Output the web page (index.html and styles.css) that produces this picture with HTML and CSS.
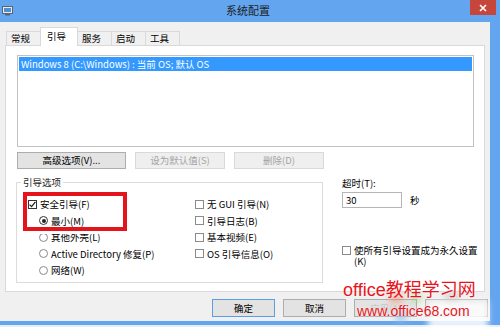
FILE: index.html
```html
<!DOCTYPE html>
<html lang="zh-CN">
<head>
    <meta charset="UTF-8">
    <title>系统配置</title>
    <link rel="stylesheet" href="styles.css">
</head>
<body>
    <div class="window">
        <div class="titlebar">
            <svg class="app-icon" width="11" height="10" viewBox="0 0 11 10">
                <rect x="0.5" y="0.5" width="10" height="7" fill="#e4ecf5" stroke="#5b6470"/>
                <rect x="2" y="2" width="7" height="4" fill="#4f8fd6"/>
                <rect x="3" y="8" width="5" height="1.5" fill="#5b6470"/>
            </svg>
            <span class="title">系统配置</span>
            <div class="close">
                <svg width="8" height="8" viewBox="0 0 8 8"><path d="M1 1 L7 7 M7 1 L1 7" stroke="#fff" stroke-width="1.6"/></svg>
            </div>
        </div>

        <div class="client">
            <div class="tabs">
                <div class="tab">常规</div>
                <div class="tab active">引导</div>
                <div class="tab">服务</div>
                <div class="tab">启动</div>
                <div class="tab">工具</div>
            </div>

            <div class="panel">
                <div class="listbox">
                    <div class="list-row selected">Windows 8 (C:\Windows) : 当前 OS; 默认 OS</div>
                </div>

                <div class="actions">
                    <button class="btn btn-wide">高级选项(V)...</button>
                    <button class="btn btn-mid" disabled>设为默认值(S)</button>
                    <button class="btn btn-mid" disabled>删除(D)</button>
                </div>

                <div class="options">
                    <fieldset class="group">
                        <legend>引导选项</legend>
                        <div class="group-body">
                            <div class="col">
                                <div class="opt"><span class="check on"><svg width="9" height="9" viewBox="0 0 9 9"><path d="M1.6 4.6 L3.6 6.6 L7.4 1.8" fill="none" stroke="#222" stroke-width="1.3"/></svg></span>安全引导(F)</div>
                                <div class="opt sub"><span class="radio on"></span>最小(M)</div>
                                <div class="opt sub"><span class="radio"></span>其他外壳(L)</div>
                                <div class="opt sub"><span class="radio"></span>Active Directory 修复(P)</div>
                                <div class="opt sub"><span class="radio"></span>网络(W)</div>
                            </div>
                            <div class="col">
                                <div class="opt"><span class="check"></span>无 GUI 引导(N)</div>
                                <div class="opt"><span class="check"></span>引导日志(B)</div>
                                <div class="opt"><span class="check"></span>基本视频(E)</div>
                                <div class="opt"><span class="check"></span>OS 引导信息(O)</div>
                            </div>
                        </div>
                    </fieldset>

                    <div class="side">
                        <div class="side-label">超时(T):</div>
                        <div class="timeout">
                            <div class="input">30</div>
                            <span>秒</span>
                        </div>
                        <div class="permanent"><span class="check"></span><span>使所有引导设置成为永久设置(K)</span></div>
                    </div>
                </div>
            </div>

            <div class="footer">
                <button class="btn btn-foot default">确定</button>
                <button class="btn btn-foot">取消</button>
                <button class="btn btn-foot faded">应用(A)</button>
                <button class="btn btn-foot faded">帮助</button>
            </div>
        </div>

        <!-- red mark drawn over the screenshot -->
        <div class="highlight"></div>

        <div class="watermark">
            <div class="wm-logo">
                <span class="blob b1"></span>
                <span class="blob b2"></span>
                <span class="blob b3"></span>
                <span class="blob b4"></span>
                <span class="blob b5"></span>
            </div>
            <div class="wm-title">office教程学习网</div>
            <div class="wm-url">www.office68.com</div>
        </div>
    </div>
</body>
</html>
```

FILE: styles.css
```css
* {
    box-sizing: border-box;
}
body {
    margin: 0;
    font-family: "Noto Sans CJK SC", sans-serif;
    font-size: 9.5px;
    color: #000;
}
.window {
    position: relative;
    width: 500px;
    height: 327px;
    background: #64a5ef;
    display: flex;
    flex-direction: column;
    overflow: hidden;
    box-shadow: inset 0 -2px 0 #e8eef6;
}
.titlebar {
    height: 22px;
    display: grid;
    grid-template-columns: 1fr auto 1fr;
    align-items: start;
    padding-right: 4px;
}
.app-icon {
    margin: 6px 0 0 2px;
}
.title {
    font-size: 11px;
    line-height: 14px;
    padding-top: 3px;
    color: #1e1e1e;
}
.close {
    justify-self: end;
    width: 26px;
    height: 15px;
    background: #c7463c;
    display: flex;
    align-items: center;
    justify-content: center;
}
.client {
    width: 490px;
    height: 299px;
    background: #f0f0f0;
    display: flex;
    flex-direction: column;
}
.tabs {
    height: 23px;
    display: flex;
    align-items: flex-end;
    padding-left: 6px;
    position: relative;
    z-index: 1;
}
.tab {
    width: 35px;
    height: 14px;
    padding-left: 4px;
    line-height: 13px;
    border: 1px solid #d9d9d9;
    border-bottom: none;
    background: #f0f0f0;
    margin-right: -1px;
}
.tab.active {
    width: 38px;
    height: 19px;
    padding-left: 6px;
    line-height: 17px;
    background: #fff;
    margin-bottom: -1px;
}
.panel {
    height: 247px;
    margin: 0 5px;
    background: #fff;
    border: 1px solid #d9d9d9;
    padding: 9px 10px 0 11px;
}
.listbox {
    height: 92px;
    border: 1px solid #c2c2c2;
    padding: 1px;
}
.list-row {
    height: 14px;
    line-height: 14px;
    padding-left: 2px;
}
.list-row.selected {
    background: #3399ff;
    color: #fff;
}
.actions {
    display: flex;
    gap: 9px;
    margin-top: 5px;
}
.btn {
    height: 17px;
    padding: 0;
    font: inherit;
    line-height: 15px;
    color: #000;
    background: #e3e3e3;
    border: 1px solid #adadad;
}
.btn:disabled {
    color: #a3a3a3;
    background: #efefef;
    border-color: #d9d9d9;
}
.btn-wide {
    width: 109px;
}
.btn-mid {
    width: 90px;
}
.options {
    display: flex;
    margin-top: 7px;
}
.group {
    flex: none;
    width: 307px;
    height: 107px;
    margin: 0 0 0 -1px;
    padding: 0 0 0 4px;
    border: 1px solid #dcdcdc;
    min-width: 0;
}
.group legend {
    padding: 0 2px;
    line-height: 12px;
    color: #1e1e1e;
}
.group-body {
    display: grid;
    grid-template-columns: 167px 1fr;
    padding: 8px 0 0 11px;
    margin-left: -4px;
}
.opt {
    height: 16.5px;
    display: flex;
    align-items: center;
    gap: 3px;
    white-space: nowrap;
}
.opt.sub {
    padding-left: 11px;
}
.check {
    flex: none;
    width: 9px;
    height: 9px;
    border: 1px solid #8a8a8a;
    background: #fff;
    display: flex;
}
.check.on {
    border-color: #333;
}
.check svg {
    margin: -1px;
}
.radio {
    flex: none;
    width: 9px;
    height: 9px;
    border: 1px solid #8a8a8a;
    border-radius: 50%;
    background: #fff;
    display: flex;
    align-items: center;
    justify-content: center;
}
.radio.on {
    border-color: #333;
}
.radio.on::after {
    content: "";
    width: 4px;
    height: 4px;
    border-radius: 50%;
    background: #222;
}
.side {
    flex: 1;
    margin: 0 -10px 0 19px;
    padding-top: 2px;
}
.side-label {
    line-height: 10px;
}
.timeout {
    display: flex;
    align-items: center;
    gap: 8px;
    margin-top: 4px;
}
.input {
    width: 60px;
    height: 16px;
    border: 1px solid #b5b5b5;
    line-height: 14px;
    padding-left: 3px;
}
.permanent {
    display: flex;
    align-items: flex-start;
    gap: 3px;
    margin-top: 37px;
    line-height: 11px;
}
.permanent .check {
    margin-top: 1px;
}
.footer {
    display: flex;
    justify-content: flex-end;
    gap: 8px;
    padding: 7px 2px 0 0;
}
.btn-foot {
    width: 63px;
    height: 18px;
    line-height: 16px;
}
.btn-foot.default {
    border-color: #5a9ee3;
}
.btn-foot.faded {
    color: #c8c8c8;
}
.highlight {
    position: absolute;
    left: 23px;
    top: 192px;
    width: 104px;
    height: 39px;
    border: 4px solid #e3141c;
    box-shadow: 0 3px 0 #fff;
}
.watermark {
    position: absolute;
    left: 343px;
    top: 281px;
    width: 150px;
    height: 46px;
}
.wm-logo {
    position: absolute;
    left: 40px;
    top: 6px;
    width: 110px;
    height: 40px;
}
.blob {
    position: absolute;
    filter: blur(3px);
    opacity: 0.55;
}
.b1 {
    left: 6px;
    top: 6px;
    width: 14px;
    height: 10px;
    background: #f08a6a;
}
.b2 {
    left: 28px;
    top: 6px;
    width: 10px;
    height: 9px;
    background: #9bd37b;
}
.b3 {
    left: 12px;
    top: 24px;
    width: 12px;
    height: 12px;
    background: #8cbde8;
}
.b4 {
    left: 62px;
    top: 6px;
    width: 14px;
    height: 9px;
    background: #b8b8b8;
}
.b5 {
    left: 45px;
    top: 14px;
    width: 60px;
    height: 30px;
    background: #ffffff;
    opacity: 0.85;
}
.wm-title {
    position: relative;
    font-family: "Liberation Sans", "Noto Sans CJK SC", sans-serif;
    font-size: 18px;
    line-height: 18px;
    color: #e8141c;
    text-shadow: 0 0 2px #fff;
}
.wm-url {
    position: relative;
    margin: 5px 0 0 14px;
    font-family: "Liberation Sans", sans-serif;
    font-size: 14px;
    line-height: 14px;
    color: #e8141c;
    text-shadow: 0 0 2px #fff;
}
```
